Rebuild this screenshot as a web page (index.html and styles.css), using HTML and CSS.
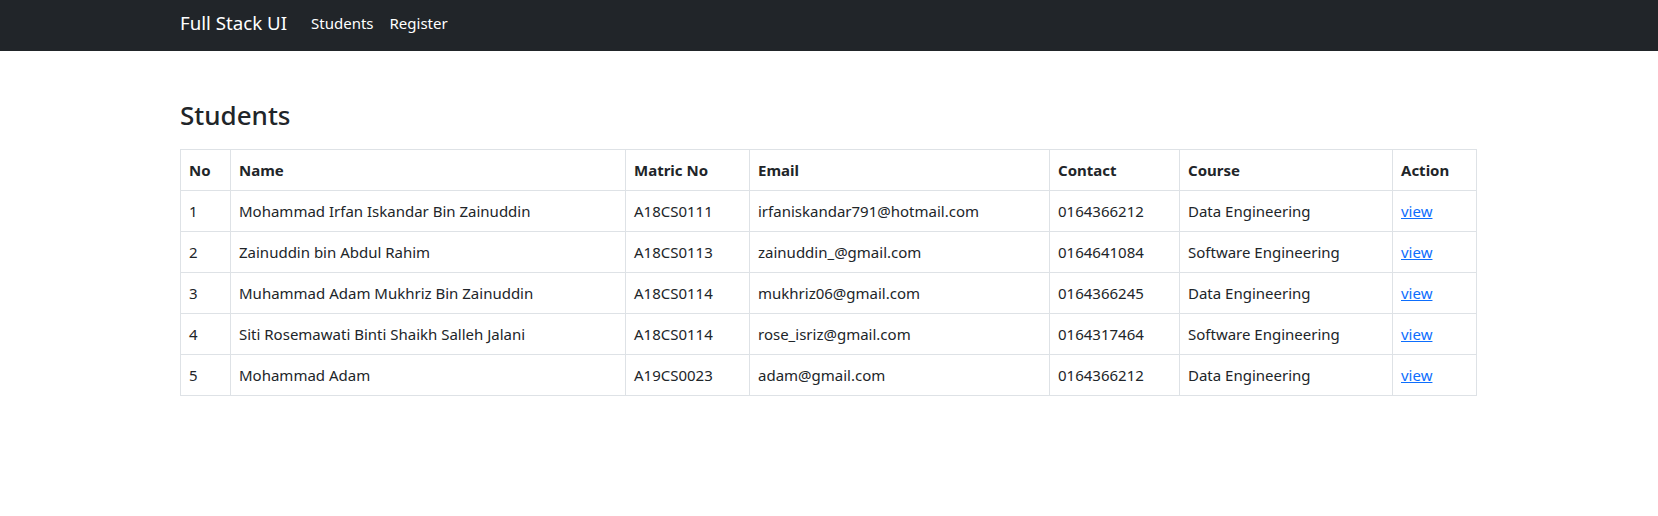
FILE: index.html
```html
<!DOCTYPE html>
<html lang="en">
<head>
<meta charset="utf-8">
<title>Full Stack UI</title>
<link rel="stylesheet" href="styles.css">
</head>
<body>
<nav class="navbar">
  <div class="container nav-inner">
    <a class="brand" href="#">Full Stack UI</a>
    <ul class="nav-links">
      <li><a class="nav-link" href="#">Students</a></li>
      <li><a class="nav-link" href="#">Register</a></li>
    </ul>
  </div>
</nav>
<main class="container">
  <h3 class="page-title">Students</h3>
  <table class="table">
    <colgroup>
      <col class="c-no"><col class="c-name"><col class="c-matric"><col class="c-email"><col class="c-contact"><col class="c-course"><col class="c-action">
    </colgroup>
    <thead>
      <tr><th>No</th><th>Name</th><th>Matric No</th><th>Email</th><th>Contact</th><th>Course</th><th>Action</th></tr>
    </thead>
    <tbody>
      <tr><td>1</td><td>Mohammad Irfan Iskandar Bin Zainuddin</td><td>A18CS0111</td><td>irfaniskandar791@hotmail.com</td><td>0164366212</td><td>Data Engineering</td><td><a href="#">view</a></td></tr>
      <tr><td>2</td><td>Zainuddin bin Abdul Rahim</td><td>A18CS0113</td><td>zainuddin_@gmail.com</td><td>0164641084</td><td>Software Engineering</td><td><a href="#">view</a></td></tr>
      <tr><td>3</td><td>Muhammad Adam Mukhriz Bin Zainuddin</td><td>A18CS0114</td><td>mukhriz06@gmail.com</td><td>0164366245</td><td>Data Engineering</td><td><a href="#">view</a></td></tr>
      <tr><td>4</td><td>Siti Rosemawati Binti Shaikh Salleh Jalani</td><td>A18CS0114</td><td>rose_isriz@gmail.com</td><td>0164317464</td><td>Software Engineering</td><td><a href="#">view</a></td></tr>
      <tr><td>5</td><td>Mohammad Adam</td><td>A19CS0023</td><td>adam@gmail.com</td><td>0164366212</td><td>Data Engineering</td><td><a href="#">view</a></td></tr>
    </tbody>
  </table>
</main>
</body>
</html>
```
FILE: styles.css
```css
* { box-sizing: border-box; }
html, body { margin: 0; padding: 0; }
body {
  font-family: "Noto Sans", "Open Sans", sans-serif;
  font-size: 15px;
  line-height: 24px;
  color: #212529;
  background: #fff;
}
.container {
  width: 1320px;
  margin: 0 auto;
  padding: 0 13px 0 11px;
}
.navbar {
  background: #212529;
  padding: 8px 0 13px;
}
.nav-inner {
  display: flex;
  align-items: center;
}
.brand {
  font-size: 18.7px;
  line-height: 30px;
  color: #fff;
  text-decoration: none;
  margin-right: 16px;
}
.nav-links {
  display: flex;
  list-style: none;
  margin: 0;
  padding: 0;
}
.nav-link {
  display: block;
  padding: 0 8px;
  line-height: 24px;
  color: #fff;
  text-decoration: none;
}
.page-title {
  font-size: 26px;
  font-weight: 500;
  line-height: 33.6px;
  margin: 48px 0 16px;
}
.table {
  width: 100%;
  table-layout: fixed;
  border-collapse: collapse;
  border: 1px solid #dee2e6;
}
.table th, .table td {
  border: 1px solid #dee2e6;
  padding: 8px;
  text-align: left;
  vertical-align: top;
  white-space: nowrap;
}
.table th { font-weight: 700; }
.table a { color: #0d6efd; text-decoration: underline; }
.c-no { width: 50px; }
.c-name { width: 395px; }
.c-matric { width: 124px; }
.c-email { width: 300px; }
.c-contact { width: 130px; }
.c-course { width: 213px; }
.c-action { width: 84px; }
```
